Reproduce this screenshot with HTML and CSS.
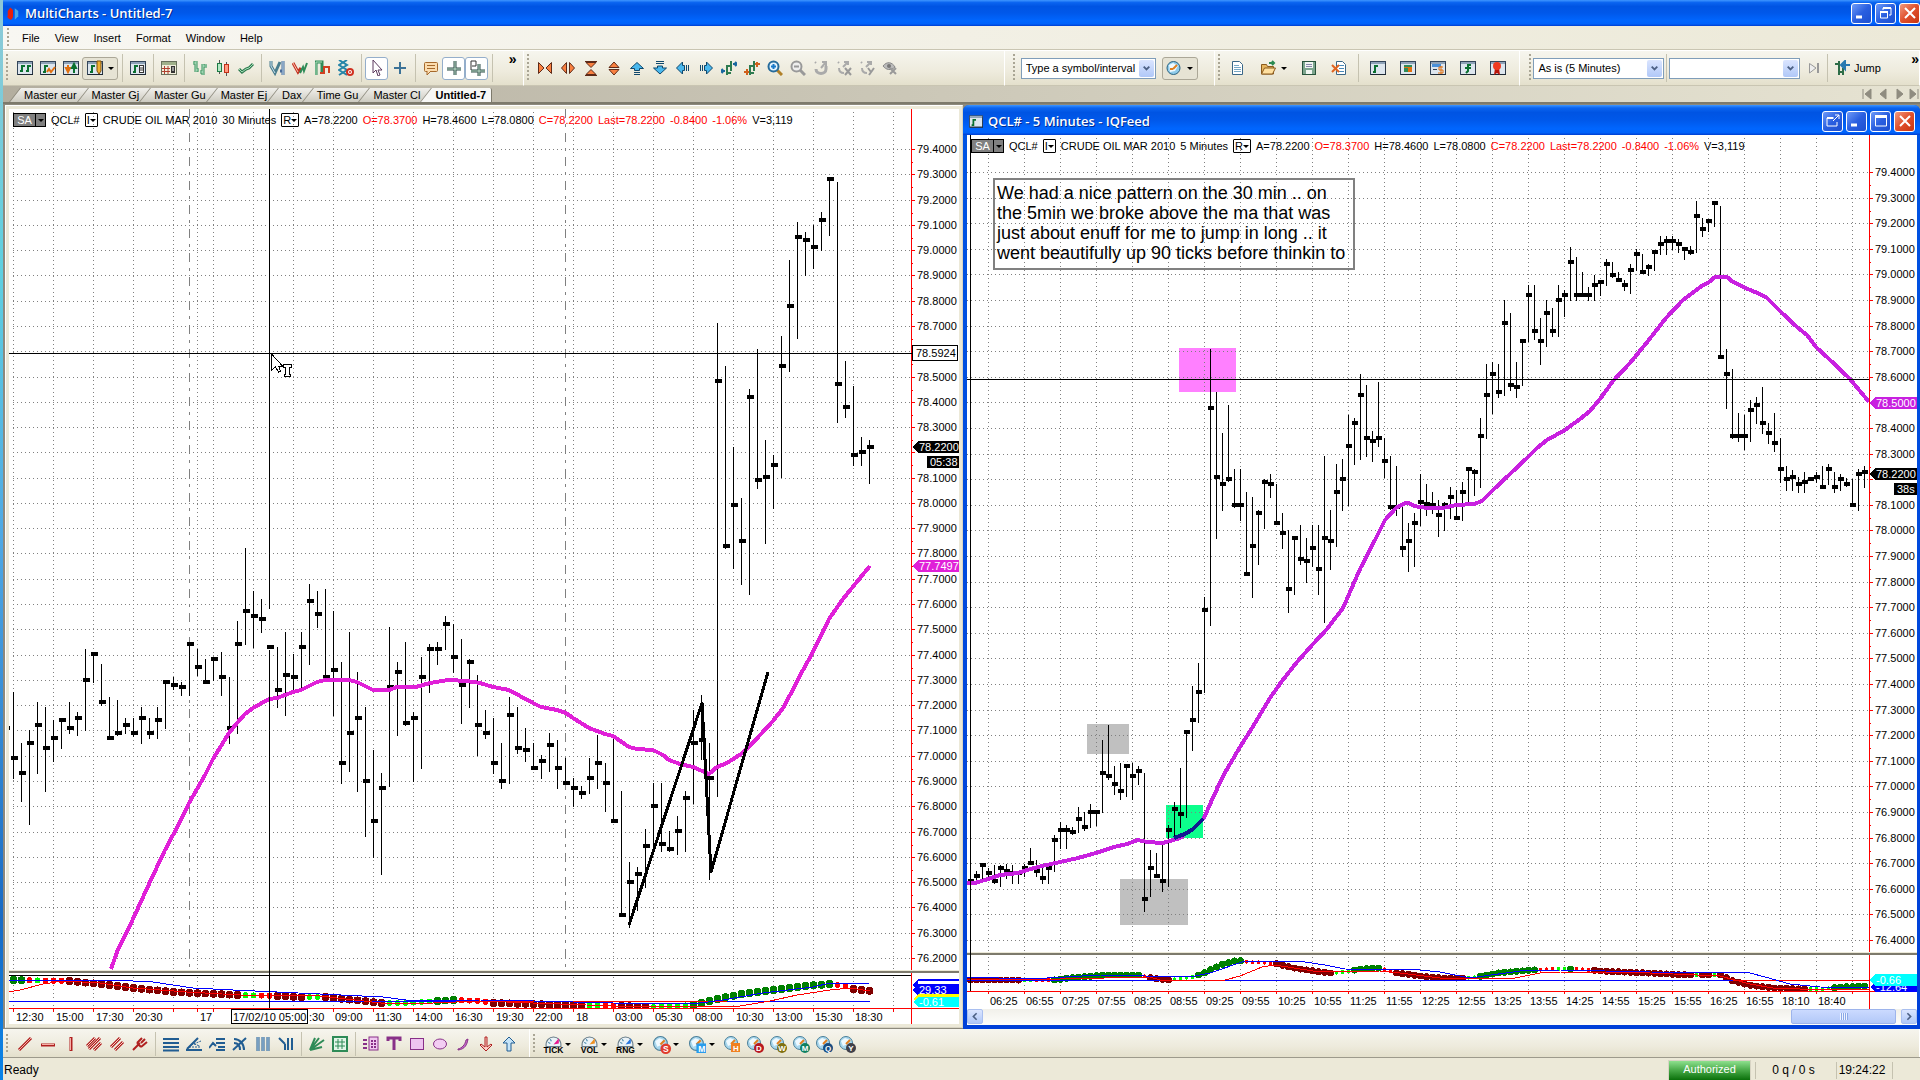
FILE: index.html
```html
<!DOCTYPE html>
<html lang="en">
<head>
    <meta charset="UTF-8">
    <title>MultiCharts - Untitled-7</title>
    <link rel="stylesheet" href="styles.css">
</head>
<body>
    <!-- icon sprite -->
    <svg class="sprite" aria-hidden="true">
        <symbol id="base" viewBox="0 0 16 16"><rect x="0.5" y="1.5" width="15" height="13" fill="#dde6ee" stroke="#34465a"/><path d="M1 2h14v2H1z" fill="#8fa3b8"/><path d="M1 14.5h15V3" fill="none" stroke="#1c2733"/></symbol>
        <symbol id="note-bar" viewBox="0 0 16 16"><path d="M5 5v8M3 12h2M5 6h3" stroke="#0a7030" stroke-width="2" fill="none"/></symbol>
        <symbol id="win1" viewBox="0 0 16 16"><use href="#base"/><path d="M5 5v7M3 11h2M5 6h3M11 5v7M9 11h2M11 6h3" stroke="#0a7030" stroke-width="2" fill="none"/></symbol>
        <symbol id="win2" viewBox="0 0 16 16"><use href="#base"/><use href="#note-bar"/><path d="M7 12l2-3 2 3 4-5" stroke="#e07010" stroke-width="2" fill="none"/></symbol>
        <symbol id="win3" viewBox="0 0 16 16"><use href="#base"/><path d="M5 5v5M3 8l2 4 2-4z" stroke="#e07010" stroke-width="2" fill="#e07010"/><path d="M11 13V7M9 8l2-4 2 4z" stroke="#0a7030" stroke-width="2" fill="#0a7030"/></symbol>
        <symbol id="win4" viewBox="0 0 16 16"><use href="#base"/><use href="#note-bar"/><path d="M10 1h4v10l-2 3-2-3z" fill="#f0b030" stroke="#80500a"/></symbol>
        <symbol id="win5" viewBox="0 0 16 16"><use href="#base"/><use href="#note-bar"/><rect x="9.500" y="5.500" width="4" height="7" fill="#fff" stroke="#333"/><path d="M10 8h3M10 10h3" stroke="#333"/></symbol>
        <symbol id="win6" viewBox="0 0 16 16"><rect x="0.5" y="1.5" width="15" height="13" fill="#f1efdc" stroke="#69705c"/><path d="M1 2h14v3H1z" fill="#9fb08a"/><path d="M1 8.500h8M1 11.500h8M3.500 6v8M7 6v8" stroke="#b04030"/><rect x="10" y="6" width="4" height="7" fill="#333"/><path d="M11 8h2M11 10h2" stroke="#fff"/></symbol>
        <symbol id="ohlc" viewBox="0 0 16 16"><path d="M4 1v11M1 3h3M4 10h3M11 4v11M8 12h3M11 6h4" stroke="#2f8b57" stroke-width="3" fill="none"/><path d="M4 1v11M1 3h3M4 10h3M11 4v11M8 12h3M11 6h4" stroke="#c5ecd0" fill="none"/></symbol>
        <symbol id="candle" viewBox="0 0 16 16"><path d="M4.500 0v14M11.500 2v14" stroke="#555"/><rect x="2.500" y="3.500" width="4" height="8" fill="#b5e8c4" stroke="#1c7a44"/><rect x="9.500" y="4.500" width="4" height="8" fill="#ff9a80" stroke="#c33018"/></symbol>
        <symbol id="check" viewBox="0 0 16 16"><path d="M1 9l3 3 4-3 3-1 4-4" stroke="#2e7b50" stroke-width="3" fill="none"/><path d="M1 9l3 3 4-3 3-1 4-4" stroke="#a5dfb8" fill="none"/></symbol>
        <symbol id="osc1" viewBox="0 0 16 16"><path d="M2 1v5l4 7 5-11" stroke="#4a7d8d" stroke-width="3" fill="none"/><path d="M14 1v14M11 11h3" stroke="#496c9a" stroke-width="3"/><path d="M2 1v5l4 7M14 1v14" stroke="#c9e1f0" fill="none"/></symbol>
        <symbol id="osc2" viewBox="0 0 16 16"><path d="M1 3l5 9 3-4" stroke="#c23322" stroke-width="3" fill="none"/><path d="M8 13l3-6 1 4 3-8" stroke="#2e8b57" stroke-width="2" fill="none"/><path d="M1 3l5 9" stroke="#ffc0b0"/></symbol>
        <symbol id="osc3" viewBox="0 0 16 16"><path d="M1 15V2h6v10" stroke="#2e8b57" stroke-width="3" fill="none"/><path d="M5 13h4V7h5v6" stroke="#d04020" stroke-width="2" fill="none"/><path d="M1 15V2h6" stroke="#b5e2c2" fill="none"/></symbol>
        <symbol id="osc4" viewBox="0 0 16 16"><path d="M1 0l8 5-8 5 8 5M9 0L1 5l8 5-8 5" stroke="#2785a8" stroke-width="2" fill="none"/><circle cx="12" cy="12" r="3" fill="#fff" stroke="#d03020" stroke-width="2"/><circle cx="12" cy="12" r="1" fill="#d03020"/></symbol>
        <symbol id="pointer" viewBox="0 0 16 16"><path d="M4 0v13l3-3 2 6 2-1-2-5h4z" fill="#fff" stroke="#5c3a5e"/></symbol>
        <symbol id="plus" viewBox="0 0 16 16"><path d="M8 2v12M2 8h12" stroke="#3c7297" stroke-width="2"/></symbol>
        <symbol id="bubble" viewBox="0 0 16 16"><rect x="1.500" y="2.500" width="13" height="9" rx="1" fill="#fbdcae" stroke="#a5692c"/><path d="M4 11v4l4-4" fill="#fbdcae" stroke="#a5692c"/><path d="M4 5.500h8M4 8.500h8" stroke="#a5692c"/></symbol>
        <symbol id="cross" viewBox="0 0 16 16"><path d="M9 1v14M1 9h14" stroke="#2e4d48" stroke-width="3"/><path d="M9 1v14M1 9h14" stroke="#c5e6d0"/></symbol>
        <symbol id="crossp" viewBox="0 0 16 16"><path d="M10 4v12M2 11h14" stroke="#2e4d48" stroke-width="3"/><path d="M10 4v12M2 11h14" stroke="#c5e6d0"/><path d="M2 10V1h5v5H3" stroke="#333" fill="none"/></symbol>
        <symbol id="hin" viewBox="0 0 16 16"><path d="M1.500 2.500L7 8l-5.500 5.500zM14.500 2.500L9 8l5.500 5.500z" fill="#f98040" stroke="#5e2a18"/></symbol>
        <symbol id="hout" viewBox="0 0 16 16"><path d="M6.500 2.500L1.500 8l5 5.500zM9.500 2.500L14.500 8l-5 5.500z" fill="#f98040" stroke="#5e2a18"/></symbol>
        <symbol id="vin" viewBox="0 0 16 16"><path d="M3 2.500h10L8 7.500zM3 14.500h10L8 9.500z" fill="#f98040" stroke="#5e2a18"/><path d="M2 1.500h12M2 15.500h12" stroke="#5e2a18"/></symbol>
        <symbol id="vout" viewBox="0 0 16 16"><path d="M3 7.500h10L8 2zM3 9.500h10L8 15z" fill="#f98040" stroke="#5e2a18"/></symbol>
        <symbol id="up" viewBox="0 0 16 16"><path d="M8 2.500L14.500 8.500h-4v2h-5v-2h-4z" fill="#49b8ee" stroke="#10486c"/><path d="M5 12.500h6M5 14.500h6" stroke="#10486c"/></symbol>
        <symbol id="down" viewBox="0 0 16 16"><path d="M8 14L14.500 8h-4V6h-5v2h-4z" fill="#49b8ee" stroke="#10486c"/><path d="M4 1.500h8M4 3.500h8" stroke="#10486c"/></symbol>
        <symbol id="left" viewBox="0 0 16 16"><path d="M1.500 8L7.500 2v3.500h2v5h-2V14z" fill="#49b8ee" stroke="#10486c"/><path d="M11.500 5v6M13.500 5v6" stroke="#10486c"/></symbol>
        <symbol id="right" viewBox="0 0 16 16"><path d="M14.500 8L8.500 2v3.500h-2v5h2V14z" fill="#49b8ee" stroke="#10486c"/><path d="M2.500 5v6M4.500 5v6" stroke="#10486c"/></symbol>
        <symbol id="bars1" viewBox="0 0 16 16"><path d="M6 5v10M10 1v10M6 13h4M6 6h4" stroke="#2e7b50" stroke-width="2" fill="none"/><path d="M0 11h4M2 9l-2 2 2 2M12 4h4M14 2l2 2-2 2" stroke="#1a67a0" stroke-width="2" fill="none"/></symbol>
        <symbol id="bars2" viewBox="0 0 16 16"><path d="M6 5v10M10 1v10M6 13h4M6 6h4" stroke="#2e7b50" stroke-width="2" fill="none"/><path d="M0 12h5M3 9v6M11 4h5M13 2v5" stroke="#d0601c" stroke-width="2" fill="none"/></symbol>
        <symbol id="zin" viewBox="0 0 16 16"><path d="M10 10l5 5" stroke="#b08028" stroke-width="3"/><circle cx="6.500" cy="6.500" r="5" fill="#e4f4ff" stroke="#266c9c" stroke-width="2"/><path d="M4 6.500h5M6.500 4v5" stroke="#1878c8" stroke-width="2"/></symbol>
        <symbol id="zout" viewBox="0 0 16 16"><path d="M10 10l5 5" stroke="#999" stroke-width="3"/><circle cx="6.500" cy="6.500" r="5" fill="#eee" stroke="#999" stroke-width="2"/><path d="M4 6.500h5" stroke="#999" stroke-width="2"/></symbol>
        <symbol id="reset" viewBox="0 0 16 16"><path d="M2 2l1 1M8 8l5-6M9 2h4v4" stroke="#aaa" stroke-width="2" fill="none"/><path d="M3 9c0 6 10 6 10 0V6" fill="none" stroke="#aaa" stroke-width="3"/></symbol>
        <symbol id="resetx" viewBox="0 0 16 16"><path d="M2 2l1 1M7 7l5-5M8 2h4v3M3 8c0 4 3 5 5 5" stroke="#aaa" stroke-width="2" fill="none"/><path d="M9 8l6 7M15 8l-6 7" stroke="#999" stroke-width="2"/></symbol>
        <symbol id="resety" viewBox="0 0 16 16"><path d="M2 2l1 1M7 7l5-5M8 2h4v3M3 8c0 4 3 5 5 5" stroke="#aaa" stroke-width="2" fill="none"/><path d="M9 8l3 4M15 8l-5 7" stroke="#999" stroke-width="2"/></symbol>
        <symbol id="eye" viewBox="0 0 16 16"><path d="M1 6c4-5 9-4 12 1-4 4-9 3-12-1z" fill="#bbb" stroke="#888"/><circle cx="7" cy="6" r="2" fill="#777"/><path d="M8 8l6 6M14 8l-6 6" stroke="#999" stroke-width="2"/></symbol>
        <symbol id="clock" viewBox="0 0 16 16"><circle cx="7.500" cy="8" r="6.500" fill="#8fcbea" stroke="#2a6280"/><path d="M3 5l4-2 5 3-3 5-5 1z" fill="#eef9ff"/><path d="M7 9l4-4M7 9H4" stroke="#e08020" stroke-width="2"/></symbol>
        <symbol id="newdoc" viewBox="0 0 16 16"><path d="M3.500 1.500h7l3 3v10h-10z" fill="#fff" stroke="#3a6787"/><path d="M5 5.500h5M5 7.500h7M5 9.500h7M5 11.500h7" stroke="#77a8c6"/></symbol>
        <symbol id="folder" viewBox="0 0 16 16"><path d="M1.500 14V4.500h5l1 2h6V14z" fill="#e6b660" stroke="#8a5a1c"/><path d="M1.500 14l3-6h11l-3 6z" fill="#ffe0a0" stroke="#8a5a1c"/><path d="M9 3h4M12 1l2 2-2 2" stroke="#2b8b52" stroke-width="2" fill="none"/></symbol>
        <symbol id="disk" viewBox="0 0 16 16"><rect x="1.500" y="1.500" width="13" height="13" fill="#7da58e" stroke="#28543c"/><path d="M4 2h8v6H4zM5 10h6v4H5z" fill="#f1f6f2"/><path d="M5 4.500h6M5 6.500h6" stroke="#88a"/></symbol>
        <symbol id="deldoc" viewBox="0 0 16 16"><path d="M5.500 1.500h6l3 3v10h-9z" fill="#fff" stroke="#3a6787"/><path d="M8 5.500h5M8 8.500h5M8 11.500h5" stroke="#4a8ab8"/><path d="M1 5l7 7M8 5l-7 7" stroke="#e06420" stroke-width="2"/></symbol>
        <symbol id="w1" viewBox="0 0 16 16"><use href="#base"/><use href="#note-bar"/></symbol>
        <symbol id="w2" viewBox="0 0 16 16"><use href="#base"/><rect x="4" y="5" width="8" height="7" fill="#e07010"/><path d="M4 6h8M4 9h4M4 11h4" stroke="#2e8b57" stroke-width="2"/></symbol>
        <symbol id="w3" viewBox="0 0 16 16"><use href="#base"/><path d="M2 4h9v3H2z" fill="#4a90d8"/><path d="M3 9.500h4" stroke="#345"/><path d="M13 7h-4v3h4v3H8M11 6v8" stroke="#e07010" stroke-width="1" fill="none"/></symbol>
        <symbol id="w4" viewBox="0 0 16 16"><use href="#base"/><path d="M11 5H8v6l-2 2M5 8h6" stroke="#0a7030" stroke-width="2" fill="none"/></symbol>
        <symbol id="w5" viewBox="0 0 16 16"><use href="#base"/><path d="M5 8l-1 7 3-2 3 2-1-7z" fill="#b81408"/><circle cx="7" cy="6" r="4" fill="#ee3a20"/></symbol>
        <symbol id="step" viewBox="0 0 16 16"><path d="M3.500 3.500L10 8l-6.500 5z" fill="#eee" stroke="#999"/><path d="M12 3v10" stroke="#999" stroke-width="2"/></symbol>
        <symbol id="jump" viewBox="0 0 16 16"><path d="M5 1v14M1 4h4M5 12h4M9 8v7" stroke="#2e6d48" stroke-width="2" fill="none"/><path d="M8 5h8M11 1L7 5l4 4z" stroke="#2878b0" fill="#49b8ee" stroke-width="2"/></symbol>

        <symbol id="d1" viewBox="0 0 16 16"><path d="M2 14L14 2" stroke="#b02020" stroke-width="3"/><path d="M2 14L14 2" stroke="#f5b0a8"/></symbol>
        <symbol id="d2" viewBox="0 0 16 16"><path d="M1 9h14" stroke="#b02020" stroke-width="3"/><path d="M2 8.500h12" stroke="#f5b0a8"/></symbol>
        <symbol id="d3" viewBox="0 0 16 16"><path d="M8 1v14" stroke="#b02020" stroke-width="3"/><path d="M7.500 2v12" stroke="#f5b0a8"/></symbol>
        <symbol id="d4" viewBox="0 0 16 16"><path d="M1 10l8-8M3 13L14 2M8 14l7-7" stroke="#b02020" stroke-width="3"/><path d="M1 10l8-8M3 13L14 2M8 14l7-7" stroke="#fbd0c8"/></symbol>
        <symbol id="d5" viewBox="0 0 16 16"><path d="M2 11l9-9M6 14l8-8" stroke="#b02020" stroke-width="3"/><path d="M2 11l9-9M6 14l8-8" stroke="#fbd0c8"/></symbol>
        <symbol id="d6" viewBox="0 0 16 16"><path d="M1 14l7-7M5 7l5-5M9 11l6-5M5 7l4 4M9 7l4-4" stroke="#b02020" stroke-width="2"/></symbol>
        <symbol id="d7" viewBox="0 0 16 16"><path d="M0 3h16M0 7h16M0 11h16M0 14.500h16" stroke="#215d92" stroke-width="2"/></symbol>
        <symbol id="d8" viewBox="0 0 16 16"><path d="M0 14h16M1 13L12 2" stroke="#215d92" stroke-width="2"/><path d="M3 11h12M5 9l10-4M8 8l6 2" stroke="#215d92" stroke-dasharray="2 1"/></symbol>
        <symbol id="d9" viewBox="0 0 16 16"><path d="M0 12l4-5 3 3M7 3h9M7 7h9M9 11h7M7 14h9" stroke="#215d92" stroke-width="2" fill="none"/></symbol>
        <symbol id="d10" viewBox="0 0 16 16"><path d="M1 14L14 2M2 3c6 0 10 5 10 11M2 7c4 0 6 3 6 7" stroke="#215d92" stroke-width="2" fill="none"/></symbol>
        <symbol id="d11" viewBox="0 0 16 16"><path d="M3 1v14M8 1v14M13 1v14" stroke="#215d92" stroke-width="3"/><path d="M3 1v14M8 1v14M13 1v14" stroke="#cfe2f2"/></symbol>
        <symbol id="d12" viewBox="0 0 16 16"><path d="M1 2l6 6M7 8v6M10 2v12M14 2v12" stroke="#215d92" stroke-width="2"/></symbol>
        <symbol id="d13" viewBox="0 0 16 16"><path d="M1 14L6 2M1 14l9-12M1 14L15 4M1 14l12-3" stroke="#2e8b57" stroke-width="2"/></symbol>
        <symbol id="d14" viewBox="0 0 16 16"><rect x="1" y="1" width="14" height="14" fill="#e2f5e8" stroke="#2e8b57" stroke-width="2"/><path d="M6 3v10M10 3v10M3 6h10M3 10h10" stroke="#2e8b57"/></symbol>
        <symbol id="d15" viewBox="0 0 16 16"><path d="M0 4h4M0 8h4M0 12h4" stroke="#883088" stroke-width="2"/><rect x="6" y="1" width="9" height="13" fill="#f0c8f0" stroke="#883088"/><path d="M8 5h5M8 8h5M8 11h5" stroke="#883088" stroke-width="2" stroke-dasharray="2 1"/></symbol>
        <symbol id="d16" viewBox="0 0 16 16"><path d="M2 5V2h12v3M8 2v12" stroke="#883088" stroke-width="3" fill="none"/></symbol>
        <symbol id="d17" viewBox="0 0 16 16"><rect x="1.500" y="2.500" width="13" height="11" fill="#eec4f0" stroke="#883088"/></symbol>
        <symbol id="d18" viewBox="0 0 16 16"><ellipse cx="8" cy="8" rx="6.500" ry="5" fill="#f3cdf3" stroke="#883088"/></symbol>
        <symbol id="d19" viewBox="0 0 16 16"><path d="M3 14c7-1 9-5 10-11l-2 1c-1 5-4 8-8 9z" fill="#c56cc8" stroke="#883088"/></symbol>
        <symbol id="d20" viewBox="0 0 16 16"><path d="M8 15l-6-6 1-1 4 3V1h2v10l4-3 1 1z" fill="#fbd0c8" stroke="#b02020"/></symbol>
        <symbol id="d21" viewBox="0 0 16 16"><path d="M8 1l6 6h-4v8H6V7H2z" fill="#c6e4f8" stroke="#215d92"/></symbol>
        <symbol id="gauge" viewBox="0 0 16 16"><path d="M1 10C0-2 16-2 15 10z" fill="#eaf3f8" stroke="#687c88"/><path d="M3 6l2 1M5 3l1 2" stroke="#4488aa"/></symbol>
        <symbol id="globe" viewBox="0 0 16 16"><circle cx="7" cy="7" r="6.500" fill="#a9d8ee" stroke="#4a7e98"/><path d="M2 5l4-3 5 2-2 4-5 2z" fill="#eef9ff"/><path d="M7 8l4-4" stroke="#e08020" stroke-width="2"/></symbol>
    </svg>

    <div class="app">
        <div class="titlebar">
            <svg class="logo" viewBox="0 0 16 16"><path d="M5 1l3 3v8l-2 3-4-2V5z" fill="#e8200c"/><path d="M5 15l-4-4h7z" fill="#e8200c"/><path d="M10 2l4 3v6l-4 4V6z" fill="#48a8e8"/></svg>
            <h1>MultiCharts - Untitled-7</h1>
            <div class="winbtns">
                <button class="wb" aria-label="Minimize"><svg viewBox="0 0 16 16"><path d="M2 12h6" stroke="#fff" stroke-width="3"/></svg></button>
                <button class="wb" aria-label="Restore"><svg viewBox="0 0 16 16"><path d="M5 5V3h8v7h-2M2.500 7h7v6h-7zM2 7h8" fill="none" stroke="#fff" stroke-width="1"/><path d="M5 3h8M2 7h8" stroke="#fff" stroke-width="2"/></svg></button>
                <button class="wb close" aria-label="Close"><svg viewBox="0 0 16 16"><path d="M3 3l10 10M13 3L3 13" stroke="#fff" stroke-width="2"/></svg></button>
            </div>
        </div>

        <nav class="menubar">
            <span class="grip"></span>
            <button>File</button><button>View</button><button>Insert</button><button>Format</button><button>Window</button><button>Help</button>
        </nav>

        <div class="toolbars">
            <div class="bar b1">
                <span class="grip"></span>
                <button class="tool"><svg><use href="#win1"/></svg></button>
                <button class="tool"><svg><use href="#win2"/></svg></button>
                <button class="tool"><svg><use href="#win3"/></svg></button>
                <button class="tool split framed"><svg><use href="#win4"/></svg><i class="dd"></i></button>
                <span class="sep"></span>
                <button class="tool"><svg><use href="#win5"/></svg></button>
                <span class="sep"></span>
                <button class="tool"><svg><use href="#win6"/></svg></button>
                <span class="sep"></span>
                <button class="tool"><svg><use href="#ohlc"/></svg></button>
                <button class="tool"><svg><use href="#candle"/></svg></button>
                <button class="tool"><svg><use href="#check"/></svg></button>
                <span class="sep"></span>
                <button class="tool"><svg><use href="#osc1"/></svg></button>
                <button class="tool"><svg><use href="#osc2"/></svg></button>
                <button class="tool"><svg><use href="#osc3"/></svg></button>
                <button class="tool"><svg><use href="#osc4"/></svg></button>
                <span class="sep"></span>
                <button class="tool on"><svg><use href="#pointer"/></svg></button>
                <button class="tool"><svg><use href="#plus"/></svg></button>
                <span class="sep"></span>
                <button class="tool"><svg><use href="#bubble"/></svg></button>
                <button class="tool on"><svg><use href="#cross"/></svg></button>
                <button class="tool on"><svg><use href="#crossp"/></svg></button>
                <span class="sep"></span>
                <span class="more">»</span>
            </div>
            <div class="bar b2">
                <span class="grip"></span>
                <button class="tool"><svg><use href="#hin"/></svg></button>
                <button class="tool"><svg><use href="#hout"/></svg></button>
                <button class="tool"><svg><use href="#vin"/></svg></button>
                <button class="tool"><svg><use href="#vout"/></svg></button>
                <button class="tool"><svg><use href="#up"/></svg></button>
                <button class="tool"><svg><use href="#down"/></svg></button>
                <button class="tool"><svg><use href="#left"/></svg></button>
                <button class="tool"><svg><use href="#right"/></svg></button>
                <button class="tool"><svg><use href="#bars1"/></svg></button>
                <button class="tool"><svg><use href="#bars2"/></svg></button>
                <button class="tool"><svg><use href="#zin"/></svg></button>
                <button class="tool"><svg><use href="#zout"/></svg></button>
                <button class="tool"><svg><use href="#reset"/></svg></button>
                <button class="tool"><svg><use href="#resetx"/></svg></button>
                <button class="tool"><svg><use href="#resety"/></svg></button>
                <button class="tool"><svg><use href="#eye"/></svg></button>
            </div>
            <div class="bar b3">
                <span class="grip"></span>
                <span class="combo"><select aria-label="Symbol"><option>Type a symbol/interval</option></select><svg viewBox="0 0 16 16"><path d="M5 6l3 3 3-3" fill="none" stroke="#4d6185" stroke-width="2"/></svg></span>
                <button class="tool split framed"><svg><use href="#clock"/></svg><i class="dd"></i></button>
            </div>
            <div class="bar b4">
                <span class="grip"></span>
                <button class="tool"><svg><use href="#newdoc"/></svg></button>
                <button class="tool split"><svg><use href="#folder"/></svg><i class="dd"></i></button>
                <button class="tool"><svg><use href="#disk"/></svg></button>
                <button class="tool"><svg><use href="#deldoc"/></svg></button>
                <span class="sep"></span>
                <button class="tool"><svg><use href="#w1"/></svg></button>
                <button class="tool"><svg><use href="#w2"/></svg></button>
                <button class="tool"><svg><use href="#w3"/></svg></button>
                <button class="tool"><svg><use href="#w4"/></svg></button>
                <button class="tool"><svg><use href="#w5"/></svg></button>
            </div>
            <div class="bar b5">
                <span class="grip"></span>
                <span class="combo"><select aria-label="Resolution"><option>As is (5 Minutes)</option></select><svg viewBox="0 0 16 16"><path d="M5 6l3 3 3-3" fill="none" stroke="#4d6185" stroke-width="2"/></svg></span>
                <span class="sep"></span>
                <span class="combo"><select aria-label="Date"><option></option></select><svg viewBox="0 0 16 16"><path d="M5 6l3 3 3-3" fill="none" stroke="#4d6185" stroke-width="2"/></svg></span>
                <button class="tool"><svg><use href="#step"/></svg></button>
                <span class="sep"></span>
                <button class="tool jump"><svg><use href="#jump"/></svg>Jump</button>
                <span class="more">»</span>
            </div>
        </div>

        <div class="tabstrip">
            <ul class="tabs">
                <li>Master eur</li><li>Master Gj</li><li>Master Gu</li><li>Master Ej</li><li>Dax</li><li>Time Gu</li><li>Master Cl</li><li class="active">Untitled-7</li>
            </ul>
            <div class="tabnav">
                <svg viewBox="0 0 60 12"><path d="M3 1v10M11 1v10l-6-5zM26 1v10l-6-5zM37 1v10l6-5zM50 1v10l6-5zM58 1v10" fill="#8f8c80" stroke="#8f8c80"/></svg>
            </div>
        </div>

        <main class="mdi">
            <section class="win win-left">
                <div class="chart">
                    <svg class="plot" id="chartLeft"></svg>
                    <div class="quote">
                        <button class="sa"><span>SA</span><i class="dd"></i></button>
                        <span>QCL#</span><button class="mini">I<i class="dd"></i></button><span>CRUDE OIL MAR 2010</span><span>30 Minutes</span><button class="mini">R<i class="dd"></i></button>
                        <span>A=78.2200</span><span class="red">O=78.3700</span><span>H=78.4600</span><span>L=78.0800</span><span class="red">C=78.2200</span><span class="red">Last=78.2200</span><span class="red">-0.8400</span><span class="red">-1.06%</span><span>V=3,119</span>
                    </div>
                </div>
            </section>
            <section class="win win-right">
                <div class="childtitle">
                    <svg class="logo" viewBox="0 0 16 16"><use href="#w1"/></svg>
                    <h2>QCL# - 5 Minutes - IQFeed</h2>
                    <div class="winbtns">
                        <button class="wb" aria-label="Detach"><svg viewBox="0 0 16 16"><path d="M9 5H2v8h10V9M8 8l6-6M10 2h4v4" fill="none" stroke="#fff" stroke-width="1"/><path d="M2 5h6" stroke="#fff" stroke-width="2"/></svg></button>
                        <button class="wb" aria-label="Minimize"><svg viewBox="0 0 16 16"><path d="M2 12h6" stroke="#fff" stroke-width="3"/></svg></button>
                        <button class="wb" aria-label="Maximize"><svg viewBox="0 0 16 16"><path d="M2.500 3v10h11V3" fill="none" stroke="#fff"/><path d="M2 3.500h12" stroke="#fff" stroke-width="3"/></svg></button>
                        <button class="wb close" aria-label="Close"><svg viewBox="0 0 16 16"><path d="M3 3l10 10M13 3L3 13" stroke="#fff" stroke-width="2"/></svg></button>
                    </div>
                </div>
                <div class="chart">
                    <svg class="plot" id="chartRight"></svg>
                    <div class="quote">
                        <button class="sa"><span>SA</span><i class="dd"></i></button>
                        <span>QCL#</span><button class="mini">I<i class="dd"></i></button><span>CRUDE OIL MAR 2010</span><span>5 Minutes</span><button class="mini">R<i class="dd"></i></button>
                        <span>A=78.2200</span><span class="red">O=78.3700</span><span>H=78.4600</span><span>L=78.0800</span><span class="red">C=78.2200</span><span class="red">Last=78.2200</span><span class="red">-0.8400</span><span class="red">-1.06%</span><span>V=3,119</span>
                    </div>
                    <div class="note">We had a nice pattern on the 30 min .. on<br>the 5min we broke above the ma that was<br>just about enuff for me to jump in long .. it<br>went beautifully up 90 ticks before thinkin to</div>
                </div>
                <div class="scroll">
                    <button aria-label="Scroll left"><svg viewBox="0 0 16 16"><path d="M10 4L6 8l4 4" fill="none" stroke="#4d6185" stroke-width="2"/></svg></button>
                    <div class="track"><div class="thumb"></div></div>
                    <button aria-label="Scroll right"><svg viewBox="0 0 16 16"><path d="M6 4l4 4-4 4" fill="none" stroke="#4d6185" stroke-width="2"/></svg></button>
                </div>
            </section>
        </main>

        <div class="drawbar">
            <div class="bar d1">
                <span class="grip"></span>
                <button class="tool"><svg><use href="#d1"/></svg></button>
                <button class="tool"><svg><use href="#d2"/></svg></button>
                <button class="tool"><svg><use href="#d3"/></svg></button>
                <button class="tool"><svg><use href="#d4"/></svg></button>
                <button class="tool"><svg><use href="#d5"/></svg></button>
                <button class="tool"><svg><use href="#d6"/></svg></button>
                <span class="sep"></span>
                <button class="tool"><svg><use href="#d7"/></svg></button>
                <button class="tool"><svg><use href="#d8"/></svg></button>
                <button class="tool"><svg><use href="#d9"/></svg></button>
                <button class="tool"><svg><use href="#d10"/></svg></button>
                <button class="tool"><svg><use href="#d11"/></svg></button>
                <button class="tool"><svg><use href="#d12"/></svg></button>
                <span class="sep"></span>
                <button class="tool"><svg><use href="#d13"/></svg></button>
                <button class="tool"><svg><use href="#d14"/></svg></button>
                <span class="sep"></span>
                <button class="tool"><svg><use href="#d15"/></svg></button>
                <button class="tool"><svg><use href="#d16"/></svg></button>
                <button class="tool"><svg><use href="#d17"/></svg></button>
                <button class="tool"><svg><use href="#d18"/></svg></button>
                <button class="tool"><svg><use href="#d19"/></svg></button>
                <button class="tool"><svg><use href="#d20"/></svg></button>
                <button class="tool"><svg><use href="#d21"/></svg></button>
            </div>
            <div class="bar d2">
                <span class="grip"></span>
                <button class="tool split res"><svg viewBox="0 0 16 16"><use href="#gauge"/><path d="M8 8l5-6v5z" fill="#e81890"/><text class="lbl" x="8" y="16">TICK</text></svg><i class="dd"></i></button>
                <button class="tool split res"><svg viewBox="0 0 16 16"><use href="#gauge"/><path d="M8 8l5-6v5z" fill="#f09020"/><text class="lbl" x="8" y="16">VOL</text></svg><i class="dd"></i></button>
                <button class="tool split res"><svg viewBox="0 0 16 16"><use href="#gauge"/><path d="M8 8l5-6v5z" fill="#2878e0"/><text class="lbl" x="8" y="16">RNG</text></svg><i class="dd"></i></button>
                <button class="tool split res"><svg viewBox="0 0 16 16"><use href="#globe"/><circle cx="12" cy="12" r="5" fill="#e03c2c"/><text class="dot" x="12" y="15">S</text></svg><i class="dd"></i></button>
                <button class="tool split res"><svg viewBox="0 0 16 16"><use href="#globe"/><rect x="7" y="7" width="9" height="9" fill="#2a9cec"/><text class="dot" x="12" y="15">M</text></svg><i class="dd"></i></button>
                <button class="tool"><svg viewBox="0 0 16 16"><use href="#globe"/><rect x="7" y="7" width="9" height="9" fill="#f08020"/><text class="dot" x="12" y="15">H</text></svg></button>
                <button class="tool"><svg viewBox="0 0 16 16"><use href="#globe"/><circle cx="12" cy="12" r="5" fill="#b81820"/><text class="dot" x="12" y="15">D</text></svg></button>
                <button class="tool"><svg viewBox="0 0 16 16"><use href="#globe"/><circle cx="12" cy="12" r="5" fill="#807010"/><text class="dot" x="12" y="15">W</text></svg></button>
                <button class="tool"><svg viewBox="0 0 16 16"><use href="#globe"/><circle cx="12" cy="12" r="5" fill="#108060"/><text class="dot" x="12" y="15">M</text></svg></button>
                <button class="tool"><svg viewBox="0 0 16 16"><use href="#globe"/><circle cx="12" cy="12" r="5" fill="#184c80"/><text class="dot" x="12" y="15">Q</text></svg></button>
                <button class="tool"><svg viewBox="0 0 16 16"><use href="#globe"/><circle cx="12" cy="12" r="5" fill="#404048"/><text class="dot" x="12" y="15">Y</text></svg></button>
            </div>
        </div>

        <footer class="status">
            <span class="ready">Ready</span>
            <span class="auth">Authorized</span>
            <span class="cell speed">0 q / 0 s</span>
            <span class="cell time">19:24:22</span>
            <span class="cell end"></span>
        </footer>
    </div>
    <script src="script.js"></script>
</body>
</html>
```
FILE: styles.css
```css
*{
    box-sizing: border-box;
}
body{
    margin: 0;
    height: 100vh;
    padding-left: 3px;
    overflow: hidden;
    background: linear-gradient(#8fc9d6, #5fd0e0 25%, #4fa8e4 50%, #1a6cc4 85%, #0a84e8);
    font-family: "Liberation Sans", Arial, sans-serif;
    font-size: 11px;
    color: black;
}
button{
    font: inherit;
    color: inherit;
    border: 0;
    padding: 0;
    background: none;
}
.sprite{
    position: absolute;
    width: 0;
    height: 0;
}
.app{
    display: flex;
    flex-direction: column;
    height: 100%;
    background-color: #ece9d8;
}

/* title bars */
.titlebar, .childtitle{
    display: flex;
    align-items: center;
    color: white;
    background: linear-gradient(#3f96ff, #0a64f0 10%, #0054e3 25%, #0058ea 50%, #0066ff 80%, #0062fa 92%, #003dd0);
}
.titlebar{
    flex: 0 0 26px;
    padding-left: 3px;
}
.logo{
    width: 14px;
    height: 15px;
}
h1, h2{
    flex: 1;
    margin: 0 0 0 5px;
    font-family: "Open Sans", "Noto Sans", sans-serif;
    font-size: 13px;
    line-height: 18px;
    font-weight: 600;
    text-shadow: 1px 1px 0 #002a90;
}
.winbtns{
    display: flex;
    gap: 3px;
}
.wb{
    width: 21px;
    height: 21px;
    border: 1px solid white;
    border-radius: 3px;
    background: linear-gradient(135deg, #6f9bf8, #2a5fe0 50%, #1c4fd0);
}
.wb svg{
    display: block;
    width: 16px;
    height: 16px;
    margin: 0 auto;
}
.wb.close{
    background: linear-gradient(135deg, #f09a80, #e0502c 50%, #c83410);
}

/* menu */
.menubar{
    flex: 0 0 24px;
    display: flex;
    align-items: center;
    padding-left: 4px;
    background: linear-gradient(90deg, #f8f7f2, #ece9d8);
    border-bottom: 1px solid #c9c5b2;
}
.menubar button{
    margin-left: 15px;
}
.menubar .grip + button{
    margin-left: 13px;
}
.grip{
    flex: 0 0 2px;
    height: 20px;
    background: repeating-linear-gradient(#a9a594 0 2px, transparent 2px 4px);
}

/* tool bars */
.toolbars{
    flex: 0 0 36px;
    display: flex;
    border-top: 1px solid white;
}
.bar{
    display: flex;
    align-items: center;
    padding-left: 3px;
    background: linear-gradient(#f6f5ee, #eeebdd 60%, #e4e0cc);
    border-right: 1px solid white;
    border-bottom: 1px solid #c9c5b2;
}
.toolbars .grip{
    height: 28px;
}
.b1{ flex: 525 1 0; }
.b2{ flex: 485 1 0; }
.b3{ flex: 205 1 0; }
.b4{ flex: 306 1 0; }
.b5{ flex: 396 1 0; }
.b1 .grip, .d1 .grip{
    margin-right: 5px;
}
.b2 .grip{
    margin-right: 5px;
}
.b3{
    padding-left: 8px;
    gap: 6px;
}
.b5{
    padding-left: 9px;
    gap: 2px;
}
.tool{
    flex: 0 0 23px;
    height: 23px;
    display: flex;
    align-items: center;
    justify-content: center;
    border: 1px solid transparent;
    border-radius: 3px;
}
.tool svg{
    width: 16px;
    height: 16px;
    flex: 0 0 16px;
}
.tool.on{
    background-color: white;
    border-color: #94aecb;
}
.tool.split{
    flex-basis: 36px;
    gap: 5px;
}
.tool.framed{
    border-color: #aba797;
    background-color: #e6e3d4;
}
.tool.jump{
    flex-basis: 54px;
    gap: 4px;
}
.dd{
    border: 3px solid transparent;
    border-top-color: black;
    border-bottom: 0;
}
.sep{
    flex: 0 0 1px;
    height: 28px;
    margin: 0 3px 0 4px;
    background-color: #c5c2b0;
}
.more{
    margin: 0 6px 18px auto;
    font-size: 14px;
    font-weight: bold;
    line-height: 12px;
}
.b4 .grip{
    margin-right: 2px;
}
.b4 .tool{
    flex-basis: 30px;
}
.b4 .split{
    flex-basis: 42px;
}
.b4 .sep{
    margin-right: 4px;
}
.b5 .sep{
    margin: 0;
}
.b5 .more{
    margin-right: 0;
}
.combo{
    position: relative;
    flex: 0 0 135px;
    height: 21px;
}
.b5 .combo{
    flex-basis: 131px;
}
.combo select{
    width: 100%;
    height: 100%;
    padding: 0 4px;
    appearance: none;
    border: 1px solid #7f9db9;
    background-color: white;
    font: inherit;
    color: black;
}
.combo svg{
    position: absolute;
    right: 2px;
    top: 2px;
    width: 15px;
    height: 17px;
    border-radius: 2px;
    background: linear-gradient(#dbe5ff, #b0c8f8);
}

/* workspace tabs */
.tabstrip{
    flex: 0 0 18px;
    display: flex;
    justify-content: space-between;
    background: linear-gradient(90deg, #b3ae9f, #e6e3d2);
    border-bottom: 2px solid #7d7a6c;
}
.tabs{
    display: flex;
    margin: 0;
    padding: 2px 0 0 6px;
    list-style: none;
}
.tabs li{
    position: relative;
    z-index: 0;
    padding: 0 12px 0 15px;
    margin-right: -12px;
    line-height: 14px;
}
.tabs li::before{
    content: "";
    position: absolute;
    z-index: -1;
    inset: 0 6px 0 0;
    transform: skewX(-38deg);
    transform-origin: bottom;
    background: linear-gradient(#f1f0ec, #cdcbc0);
    border-left: 1px solid #8e8b7e;
}
.tabs .active{
    font-weight: bold;
    padding-right: 6px;
}
.tabs .active::before{
    right: 20px;
    background: #f7f7f4;
}
.tabs .active::after{
    content: "";
    position: absolute;
    z-index: -1;
    inset: 0 0 0 20px;
    background: #f7f7f4;
    border-right: 1px solid #7d7a6c;
    border-radius: 0 2px 0 0;
}
.tabnav svg{
    display: block;
    width: 60px;
    height: 12px;
    margin-top: 2px;
}

/* chart windows */
.mdi{
    flex: 1;
    display: flex;
    min-height: 0;
    background-color: #8d8a7d;
}
.win{
    flex: 1 1 0;
    display: flex;
    flex-direction: column;
    min-width: 0;
}
.win-left{
    margin: 1px 0 1px 2px;
    padding: 3px;
    border: 1px solid #d8d4c4;
    border-left-color: white;
    border-top-color: white;
    background-color: #ece9d8;
}
.win-right{
    margin-top: 1px;
    padding: 0 3px 4px 4px;
    background: linear-gradient(#0054e3, #0040d8);
    border-radius: 6px 6px 0 0;
}
.childtitle{
    flex: 0 0 30px;
    margin: 0 -3px 0 -4px;
    padding: 2px 5px 0 6px;
    border-radius: 6px 6px 0 0;
}
.chart{
    position: relative;
    flex: 1;
    min-height: 0;
    background-color: white;
    overflow: hidden;
}
.plot{
    display: block;
    width: 100%;
    height: 100%;
    shape-rendering: crispEdges;
}
.plot text{
    font-family: "Liberation Sans", Arial, sans-serif;
    font-size: 11px;
    fill: black;
}
.plot .tagtext{
    fill: white;
}
.quote{
    position: absolute;
    left: 4px;
    top: 4px;
    display: flex;
    align-items: center;
    gap: 5px;
    height: 14px;
    white-space: nowrap;
}
.red{
    color: #ff0000;
}
.sa{
    display: flex;
    align-items: center;
    width: 33px;
    height: 14px;
    border: 1px solid black;
    background-color: #808080;
    color: white;
}
.sa span{
    width: 22px;
    border-right: 1px solid black;
}
.sa .dd{
    margin-left: 2px;
}
.mini{
    display: flex;
    align-items: center;
    height: 14px;
    padding: 0 1px;
    border: 1px solid black;
    border-radius: 1px;
}
.note{
    position: absolute;
    left: 26px;
    top: 43px;
    height: 92px;
    padding: 3px 8px 0 2px;
    border: 2px solid #808080;
    font-size: 18px;
    line-height: 20px;
    white-space: nowrap;
}
.scroll{
    flex: 0 0 16px;
    display: flex;
    background: linear-gradient(#f1f0ea, #fefefb);
}
.scroll button{
    flex: 0 0 16px;
    height: 15px;
    border: 1px solid #a9bff0;
    border-radius: 2px;
    background: linear-gradient(#dbe5ff, #b0c8f8);
}
.scroll svg{
    display: block;
    width: 14px;
    height: 13px;
}
.track{
    flex: 1;
    display: flex;
    justify-content: flex-end;
    padding-right: 5px;
}
.thumb{
    width: 11.5%;
    height: 15px;
    border: 1px solid #9db4ec;
    border-radius: 2px;
    background: repeating-linear-gradient(90deg, #eef4ff 0 1px, #8ca9e8 1px 2px) center / 8px 7px no-repeat, linear-gradient(#cbdaff, #b2c8f8);
}

/* drawing bar */
.drawbar{
    flex: 0 0 29px;
    display: flex;
    border-bottom: 1px solid #9d9a8c;
    background: linear-gradient(#f2f0e6, #e6e2d0);
}
.drawbar .bar{
    padding-top: 2px;
    border-bottom: 0;
}
.drawbar .sep{
    height: 24px;
}
.d1{
    flex: 0 0 527px;
}
.d2{
    flex: 1;
}
.d2 .grip{
    margin-right: 5px;
}
.d2 .res{
    gap: 3px;
}
.drawbar .tool svg{
    overflow: visible;
}
.drawbar .res svg{
    width: 17px;
    height: 17px;
    flex-basis: 17px;
}
.lbl{
    font-size: 8px;
    font-weight: bold;
    text-anchor: middle;
}
.dot{
    font-size: 8px;
    font-weight: bold;
    text-anchor: middle;
    fill: white;
}

/* status bar */
.status{
    flex: 0 0 22px;
    display: flex;
    align-items: center;
    padding: 2px 0 0;
    background-color: #ece9d8;
}
.ready{
    flex: 1;
    padding-left: 1px;
    font-size: 12px;
}
.auth{
    width: 81px;
    height: 19px;
    line-height: 17px;
    text-align: center;
    color: white;
    background: linear-gradient(#8ee08e, #46a846 50%, #0a700a);
    outline: 1px solid #d8d4c4;
}
.cell{
    margin-left: 5px;
    height: 17px;
    line-height: 17px;
    font-size: 12px;
    border-left: 1px solid #c5c2b0;
    text-align: center;
}
.speed{
    width: 76px;
}
.time{
    width: 51px;
}
.end{
    width: 28px;
}
```
FILE: script.js
```js
const NS = "http://www.w3.org/2000/svg";

function add(parent, name, attrs, text) {
    const e = document.createElementNS(NS, name);
    for (const k in attrs) e.setAttribute(k, attrs[k]);
    if (text !== undefined) e.textContent = text;
    parent.appendChild(e);
    return e;
}
function rect(g, x, y, w, h, fill) {
    return add(g, "rect", { x: x, y: y, width: w, height: h, fill: fill });
}
function poly(g, pts, color, width) {
    return add(g, "polyline", { points: pts.join(" "), fill: "none", stroke: color, "stroke-width": width, "stroke-linejoin": "round" });
}
function dashed(g, x1, y1, x2, y2, dash) {
    add(g, "line", { x1: x1, y1: y1, x2: x2, y2: y2, stroke: "#808080", "stroke-width": 1, "stroke-dasharray": dash });
}
// arrow shaped label on the price axis
function tag(g, x, y, w, color, label, h) {
    h = h || 6;
    add(g, "polygon", { points: [x, y, x + 5, y - h, x + w, y - h, x + w, y + h, x + 5, y + h].join(" "), fill: color });
    if (label) add(g, "text", { x: x + 6, y: y + 4, class: "tagtext" }, label);
}
// [high, low, close]
function drawBars(g, bars, x0, step, tickW) {
    bars.forEach(function (b, i) {
        const x = x0 + i * step;
        rect(g, x, b[0], 1, Math.max(1, b[1] - b[0]), "#000");
        rect(g, x - 2, b[2] - 2, tickW, 4, "#000");
    });
}
function valueAt(pts, x) {
    for (let i = 1; i < pts.length; i++) {
        if (x <= pts[i][0]) {
            const a = pts[i - 1], b = pts[i];
            return a[1] + (b[1] - a[1]) * (x - a[0]) / (b[0] - a[0]);
        }
    }
    return pts[pts.length - 1][1];
}
const DOT = { g: "#008000", d: "#800000", r: "#ff0000", l: "#00ff00" };
function drawDots(g, pts, runs, x0, x1, step, big, small) {
    for (let x = x0; x <= x1; x += step) {
        const run = runs.find(function (r) { return x <= r[0]; }) || runs[runs.length - 1];
        const r = run[1] === "g" || run[1] === "d" ? big : small;
        add(g, "circle", { cx: x + 0.5, cy: valueAt(pts, x), r: r, fill: DOT[run[1]] });
    }
}
function priceAxis(g, axisX, y0, perTick, from, to, labelX, gridX, hide) {
    let n = 0;
    for (let p = from; p >= to - 0.001; p -= 0.1) {
        const y = Math.round(y0 + n * perTick);
        dashed(g, gridX, y + 0.5, axisX, y + 0.5, "1 3");
        rect(g, axisX, y, 4, 1, "#f00");
        rect(g, axisX, Math.round(y + perTick / 2), 2, 1, "#f00");
        if (hide.indexOf(p.toFixed(1)) < 0) {
            add(g, "text", { x: labelX, y: y + 4 }, p.toFixed(4));
        }
        n++;
    }
}

const leftBars = [
    [692,779,758],[743,802,773],[730,825,743],[702,774,725],[707,792,748],[720,762,738],[718,749,720],[702,734,728],
    [712,736,718],[649,731,680],[652,683,654],[664,706,702],[697,740,738],[700,736,733],[718,734,725],[718,737,733],
    [707,744,718],[718,739,733],[707,739,720],[680,729,682],[677,690,685],[682,696,687],[642,696,644],[649,676,667],
    [659,683,682],[657,681,659],[652,696,677],[677,744,728],[621,734,644],[548,645,611],[591,648,616],[599,633,619],
    [647,648,647],[647,708,690],[632,716,675],[654,692,677],[632,689,647],[584,665,601],[591,628,614],[589,678,677],
    [611,716,670],[662,784,763],[632,772,733],[672,792,718],[707,837,781],[750,858,821],[773,875,788],[627,787,687],
    [662,736,672],[642,726,723],[712,782,718],[657,769,677],[644,693,649],[642,665,649],[616,650,624],[624,673,657],
    [639,724,685],[659,708,662],[675,756,725],[710,739,733],[718,774,763],[743,789,781],[697,784,715],[707,754,748],
    [728,762,750],[743,769,768],[755,779,761],[733,772,745],[740,789,768],[758,784,783],[778,807,788],[786,799,793],
    [758,794,778],[735,789,763],[763,812,783],[738,822,821],[791,917,915],[862,928,882],[867,911,874],[829,888,846],
    [783,847,806],[783,852,844],[831,852,849],[816,855,831],[791,852,798],[710,804,743],[695,760,740],[743,880,778],
    [323,797,381],[366,549,546],[447,569,505],[498,585,541],[389,595,397],[349,489,480],[440,544,477],[455,509,465],
    [336,478,366],[260,372,306],[222,339,237],[232,276,240],[225,269,247],[212,251,220],[177,236,179],[182,423,384],
    [361,418,407],[386,466,455],[437,466,452],[440,484,447]
];
const leftMa = [
    [111,969],[117,952],[133,919],[149,884],[165,850],[181,820],[189,803],[197,789],[205,775],[213,759],[229,733],
    [237,723],[245,714],[253,708],[269,699],[277,698],[293,692],[301,690],[317,682],[325,680],[349,680],[357,682],
    [373,690],[389,690],[397,687],[416,687],[430,683],[448,680],[467,681],[480,683],[493,687],[509,690],[533,703],
    [541,707],[557,710],[566,713],[573,718],[589,728],[605,734],[613,736],[629,747],[637,749],[653,750],[663,755],
    [669,760],[680,764],[693,767],[709,774],[717,767],[727,763],[741,754],[749,747],[773,721],[783,708],[789,697],
    [803,670],[813,652],[829,619],[843,599],[860,578],[870,566]
];
const rightBars = [
    [879,883,881],[871,881,876],[864,879,865],[868,879,873],[865,884,881],[865,887,868],[864,879,871],[865,884,873],
    [871,884,873],[864,877,868],[848,865,863],[860,877,871],[865,884,878],[865,884,868],[835,872,840],[822,849,830],
    [825,849,830],[827,835,832],[807,833,819],[812,831,827],[804,828,812],[812,826,812],[740,813,773],[725,780,776],
    [766,795,784],[763,800,791],[764,797,766],[763,800,776],[766,785,771],[773,912,899],[850,897,868],[853,877,876],
    [843,892,881],[825,887,830],[802,838,809],[768,828,814],[731,818,732],[686,751,720],[663,723,692],[597,693,610],
    [349,626,408],[392,539,477],[433,511,484],[405,482,479],[469,508,505],[469,521,505],[492,576,574],[497,598,546],
    [510,565,513],[479,529,482],[474,498,484],[484,523,523],[513,549,533],[530,613,589],[536,595,538],[525,565,559],
    [538,583,561],[525,567,548],[525,595,569],[456,623,538],[510,570,541],[464,547,492],[459,511,479],[415,506,446],
    [418,465,423],[374,460,395],[385,457,438],[431,462,441],[382,447,438],[438,478,461],[456,510,507],[466,516,507],
    [507,557,548],[523,572,541],[513,567,523],[474,526,502],[484,516,504],[492,514,505],[500,537,515],[502,531,505],
    [487,519,497],[490,520,518],[482,521,492],[467,504,469],[469,496,472],[418,488,436],[364,439,395],[362,414,374],
    [364,398,392],[300,396,323],[313,391,385],[362,398,387],[339,386,341],[285,342,295],[285,340,331],[318,365,341],
    [300,347,313],[308,337,331],[285,337,300],[290,317,295],[247,301,262],[257,301,295],[272,296,295],[287,301,295],
    [275,301,285],[280,296,282],[259,286,264],[262,278,275],[272,282,280],[280,291,285],[264,294,270],[249,271,254],
    [254,274,272],[264,276,267],[250,271,252],[236,255,244],[236,255,241],[236,250,241],[239,253,244],[247,260,249],
    [246,255,252],[201,253,216],[218,237,229],[219,232,221],[201,227,203],[206,358,357],[349,409,374],[369,439,436],
    [413,442,436],[415,450,436],[400,442,410],[397,424,405],[387,434,423],[423,444,433],[413,452,443],[438,483,469],
    [466,491,479],[470,491,477],[477,493,484],[472,493,482],[478,481,479],[472,483,477],[466,488,487],[464,485,469],
    [472,493,487],[474,491,479],[478,487,484],[479,507,505],[469,511,474],[466,488,472]
];
const rightMa = [
    [967,883],[975,883],[988,879],[1000,875],[1018,873],[1027,870],[1042,866],[1060,862],[1078,858],[1096,853],
    [1114,847],[1127,844],[1138,840],[1147,842],[1163,843],[1180,838],[1185,834],[1193,829],[1204,818],[1211,802],
    [1223,776],[1240,747],[1252,728],[1270,698],[1282,681],[1297,662],[1313,644],[1327,629],[1343,608],[1360,569],
    [1375,540],[1385,520],[1396,508],[1405,503],[1409,503],[1414,506],[1427,508],[1443,508],[1456,505],[1474,504],
    [1482,501],[1492,491],[1510,474],[1528,457],[1537,448],[1547,440],[1565,430],[1580,419],[1590,411],[1600,399],
    [1613,381],[1630,363],[1648,341],[1666,318],[1683,300],[1703,285],[1708,283],[1715,277],[1727,277],[1733,282],
    [1750,290],[1760,294],[1767,298],[1780,311],[1798,328],[1807,335],[1816,347],[1828,358],[1850,379],[1869,402]
];

function drawLeft() {
    const svg = document.getElementById("chartLeft");
    const g = add(svg, "g", { transform: "translate(-9,-109)" });

    const gridX = [13, 53, 93, 133, 173, 197, 213];
    for (let x = 253; x <= 893; x += 40) gridX.push(x);
    gridX.forEach(function (x) {
        dashed(g, x + 0.5, 112, x + 0.5, 969, "1 3");
        dashed(g, x + 0.5, 977, x + 0.5, 1008, "1 3");
        rect(g, x, 1008, 1, 4, "#f00");
    });
    dashed(g, 189.5, 109, 189.5, 969, "9 6 3 6");
    dashed(g, 565.5, 109, 565.5, 969, "9 6 3 6");
    priceAxis(g, 911, 149, 25.28, 79.4, 76.2, 917, 13, ["78.6", "78.2"]);

    drawBars(g, leftBars, 13, 8, 7);
    rect(g, 9, 726, 1, 4, "#000");
    poly(g, leftMa, "#e020d8", 4);
    poly(g, [[629,925],[702,703],[711,872],[768,672]], "#000", 3);

    // indicator pane
    rect(g, 9, 970, 950, 1, "#ece9d8");
    rect(g, 9, 971, 950, 2, "#7d7a6c");
    rect(g, 9, 975, 903, 1, "#000");
    const dots = [[9,980],[69,981],[109,985],[133,988],[173,992],[237,995],[277,996],[301,997],[325,997],[381,1003],[405,1003],[437,1001],[453,1000],[480,1001],[493,1003],[565,1005],[621,1006],[653,1007],[693,1005],[717,999],[741,994],[773,990],[805,986],[829,984],[845,986],[853,989],[870,991]];
    const clip = add(svg, "clipPath", { id: "indL" });
    rect(clip, 9, 974, 903, 35, "#000");
    const ind = add(g, "g", { "clip-path": "url(#indL)" });
    drawDots(ind, dots,
        [[21,"g"],[29,"r"],[37,"l"],[61,"r"],[237,"d"],[253,"l"],[269,"r"],[301,"d"],[317,"l"],[381,"d"],[429,"l"],[453,"g"],[485,"r"],[581,"d"],[597,"l"],[613,"r"],[645,"d"],[685,"l"],[829,"g"],[845,"r"],[870,"d"]],
        13, 869, 8, 4, 3);
    rect(ind, 9, 1001, 471, 1, "#0000ff");
    rect(ind, 480, 1001, 247, 1, "#ff0000");
    rect(ind, 727, 1001, 143, 1, "#0000ff");
    poly(ind, [[9,992],[20,990],[43,984],[63,981],[100,983],[133,988],[187,992],[240,995],[320,996],[381,1003],[433,1003],[480,1001],[613,1006],[740,1006],[770,1001],[797,995],[830,990],[850,988],[870,991]], "#ff0000", 1);
    poly(ind, [[9,980],[113,980],[153,982],[193,988],[233,990],[320,994],[383,997],[413,1001],[480,1000],[533,1001],[613,1003],[693,1004],[723,1000],[763,993],[813,987],[830,983],[869,983]], "#0000ff", 1);

    rect(g, 911, 109, 1, 861, "#f00");
    rect(g, 911, 973, 1, 52, "#f00");
    rect(g, 9, 1008, 950, 1, "#f00");

    [["12:30",16],["15:00",56],["17:30",96],["20:30",135],["17",200],[":30",309],["09:00",335],["11:30",375],["14:00",415],["16:30",455],["19:30",496],["22:00",535],["18",576],["03:00",615],["05:30",655],["08:00",695],["10:30",736],["13:00",775],["15:30",815],["18:30",855]].forEach(function (t) {
        add(g, "text", { x: t[1], y: 1021 }, t[0]);
    });

    // crosshair
    rect(g, 9, 353, 903, 1, "#000");
    rect(g, 269, 109, 1, 500, "#000");
    rect(g, 269, 650, 1, 358, "#000");
    add(g, "rect", { x: 912.5, y: 345.5, width: 45, height: 15, fill: "#fff", stroke: "#000" });
    add(g, "text", { x: 916, y: 357 }, "78.5924");
    add(g, "rect", { x: 231.5, y: 1009.5, width: 76, height: 14, fill: "#fff", stroke: "#000" });
    add(g, "text", { x: 233, y: 1021 }, "17/02/10 05:00");
    add(g, "path", { d: "M271.500 354v16l4-3 3 5 2-1-2-5h4z", fill: "#fff", stroke: "#000" });
    add(g, "path", { d: "M283.500 364.500h8v3h-2v7h1v2h-6v-2h1v-7h-2z", fill: "#fff", stroke: "#000" });

    tag(g, 913, 447, 46, "#000", "78.2200");
    rect(g, 927, 456, 32, 12, "#000");
    add(g, "text", { x: 930, y: 466, class: "tagtext" }, "05:38");
    tag(g, 913, 566, 46, "#e020d8", "77.7497");
    tag(g, 913, 985, 46, "#0000ff", "");
    rect(g, 918, 981, 41, 3, "#fff");
    tag(g, 913, 990, 46, "#0000ff", "29.33");
    tag(g, 913, 999, 46, "#ffff00", "", 5);
    tag(g, 913, 1002, 46, "#00ffff", "-0.61", 5);
}

function drawRight() {
    const svg = document.getElementById("chartRight");
    const g = add(svg, "g", { transform: "translate(-967,-135)" });

    const times = ["06:25","06:55","07:25","07:55","08:25","08:55","09:25","09:55","10:25","10:55","11:25","11:55","12:25","12:55","13:25","13:55","14:25","14:55","15:25","15:55","16:25","16:55","18:10","18:40"];
    // highlighted zones
    rect(g, 1179, 348, 57, 44, "#ff80ff");
    rect(g, 1087, 724, 42, 30, "#c0c0c0");
    rect(g, 1120, 879, 68, 46, "#c0c0c0");
    rect(g, 1166, 805, 37, 33, "#0cff8c");

    for (let i = 0; i < 25; i++) {
        const x = 988 + i * 36;
        dashed(g, x + 0.5, 138, x + 0.5, 951, "1 3");
        dashed(g, x + 0.5, 957, x + 0.5, 991, "1 3");
        rect(g, x, 991, 1, 3, "#f00");
        if (times[i]) add(g, "text", { x: x + 2, y: 1005 }, times[i]);
    }
    priceAxis(g, 1869, 172, 25.6, 79.4, 76.4, 1875, 967, ["78.5", "78.2"]);

    drawBars(g, rightBars, 970, 6, 6);
    poly(g, rightMa, "#c820e0", 4);
    poly(g, [[1174,838],[1185,834],[1193,829],[1203,819]], "#101890", 4);

    // indicator pane
    rect(g, 967, 952, 950, 1, "#ece9d8");
    rect(g, 967, 953, 950, 2, "#7d7a6c");
    const dots = [[967,980],[1018,980],[1053,980],[1078,977],[1108,975],[1138,975],[1157,979],[1168,980],[1193,977],[1203,973],[1220,965],[1237,960],[1247,962],[1273,963],[1293,968],[1313,971],[1330,973],[1343,972],[1360,969],[1380,968],[1397,973],[1420,976],[1440,978],[1463,978],[1477,977],[1497,973],[1533,970],[1550,969],[1577,969],[1600,971],[1647,973],[1687,975],[1720,975],[1733,981],[1747,985],[1773,988],[1800,989],[1823,989],[1840,987],[1869,986]];
    drawDots(g, dots,
        [[1022,"d"],[1032,"l"],[1051,"r"],[1138,"g"],[1141,"l"],[1146,"r"],[1173,"d"],[1195,"l"],[1243,"g"],[1272,"r"],[1333,"d"],[1350,"l"],[1382,"g"],[1390,"r"],[1464,"d"],[1478,"l"],[1538,"g"],[1553,"r"],[1567,"l"],[1574,"g"],[1590,"r"],[1692,"d"],[1700,"l"],[1712,"d"],[1716,"l"],[1808,"d"],[1832,"l"],[1869,"g"]],
        970, 1866, 6, 3.5, 2);
    rect(g, 967, 980, 766, 1, "#0000ff");
    rect(g, 1733, 980, 136, 1, "#ff0000");
    poly(g, [[967,979],[1060,979],[1150,977],[1160,980],[1225,980],[1240,976],[1262,967],[1275,965],[1313,971],[1340,972],[1380,971],[1400,973],[1440,978],[1515,978],[1540,973],[1560,972],[1650,973],[1720,976],[1750,984],[1773,988],[1800,989],[1869,989]], "#ff0000", 1);
    poly(g, [[967,977],[1030,979],[1100,975],[1190,977],[1210,973],[1245,961],[1305,962],[1325,965],[1345,969],[1420,970],[1440,972],[1470,978],[1520,971],[1560,970],[1650,972],[1750,973],[1765,977],[1790,984],[1820,987],[1869,988]], "#0000ff", 1);

    rect(g, 1869, 135, 1, 817, "#f00");
    rect(g, 1869, 955, 1, 54, "#f00");
    rect(g, 967, 991, 950, 1, "#f00");

    // crosshair
    rect(g, 967, 379, 902, 1, "#000");
    rect(g, 970, 135, 1, 856, "#000");

    tag(g, 1870, 403, 47, "#c820e0", "78.5000");
    tag(g, 1870, 474, 47, "#000", "78.2200");
    rect(g, 1894, 483, 23, 12, "#000");
    add(g, "text", { x: 1897, y: 493, class: "tagtext" }, "38s");
    tag(g, 1870, 987, 47, "#0000ff", "-12.64", 5);
    tag(g, 1870, 980, 47, "#00ffff", "-0.66");
}

drawLeft();
drawRight();
```
